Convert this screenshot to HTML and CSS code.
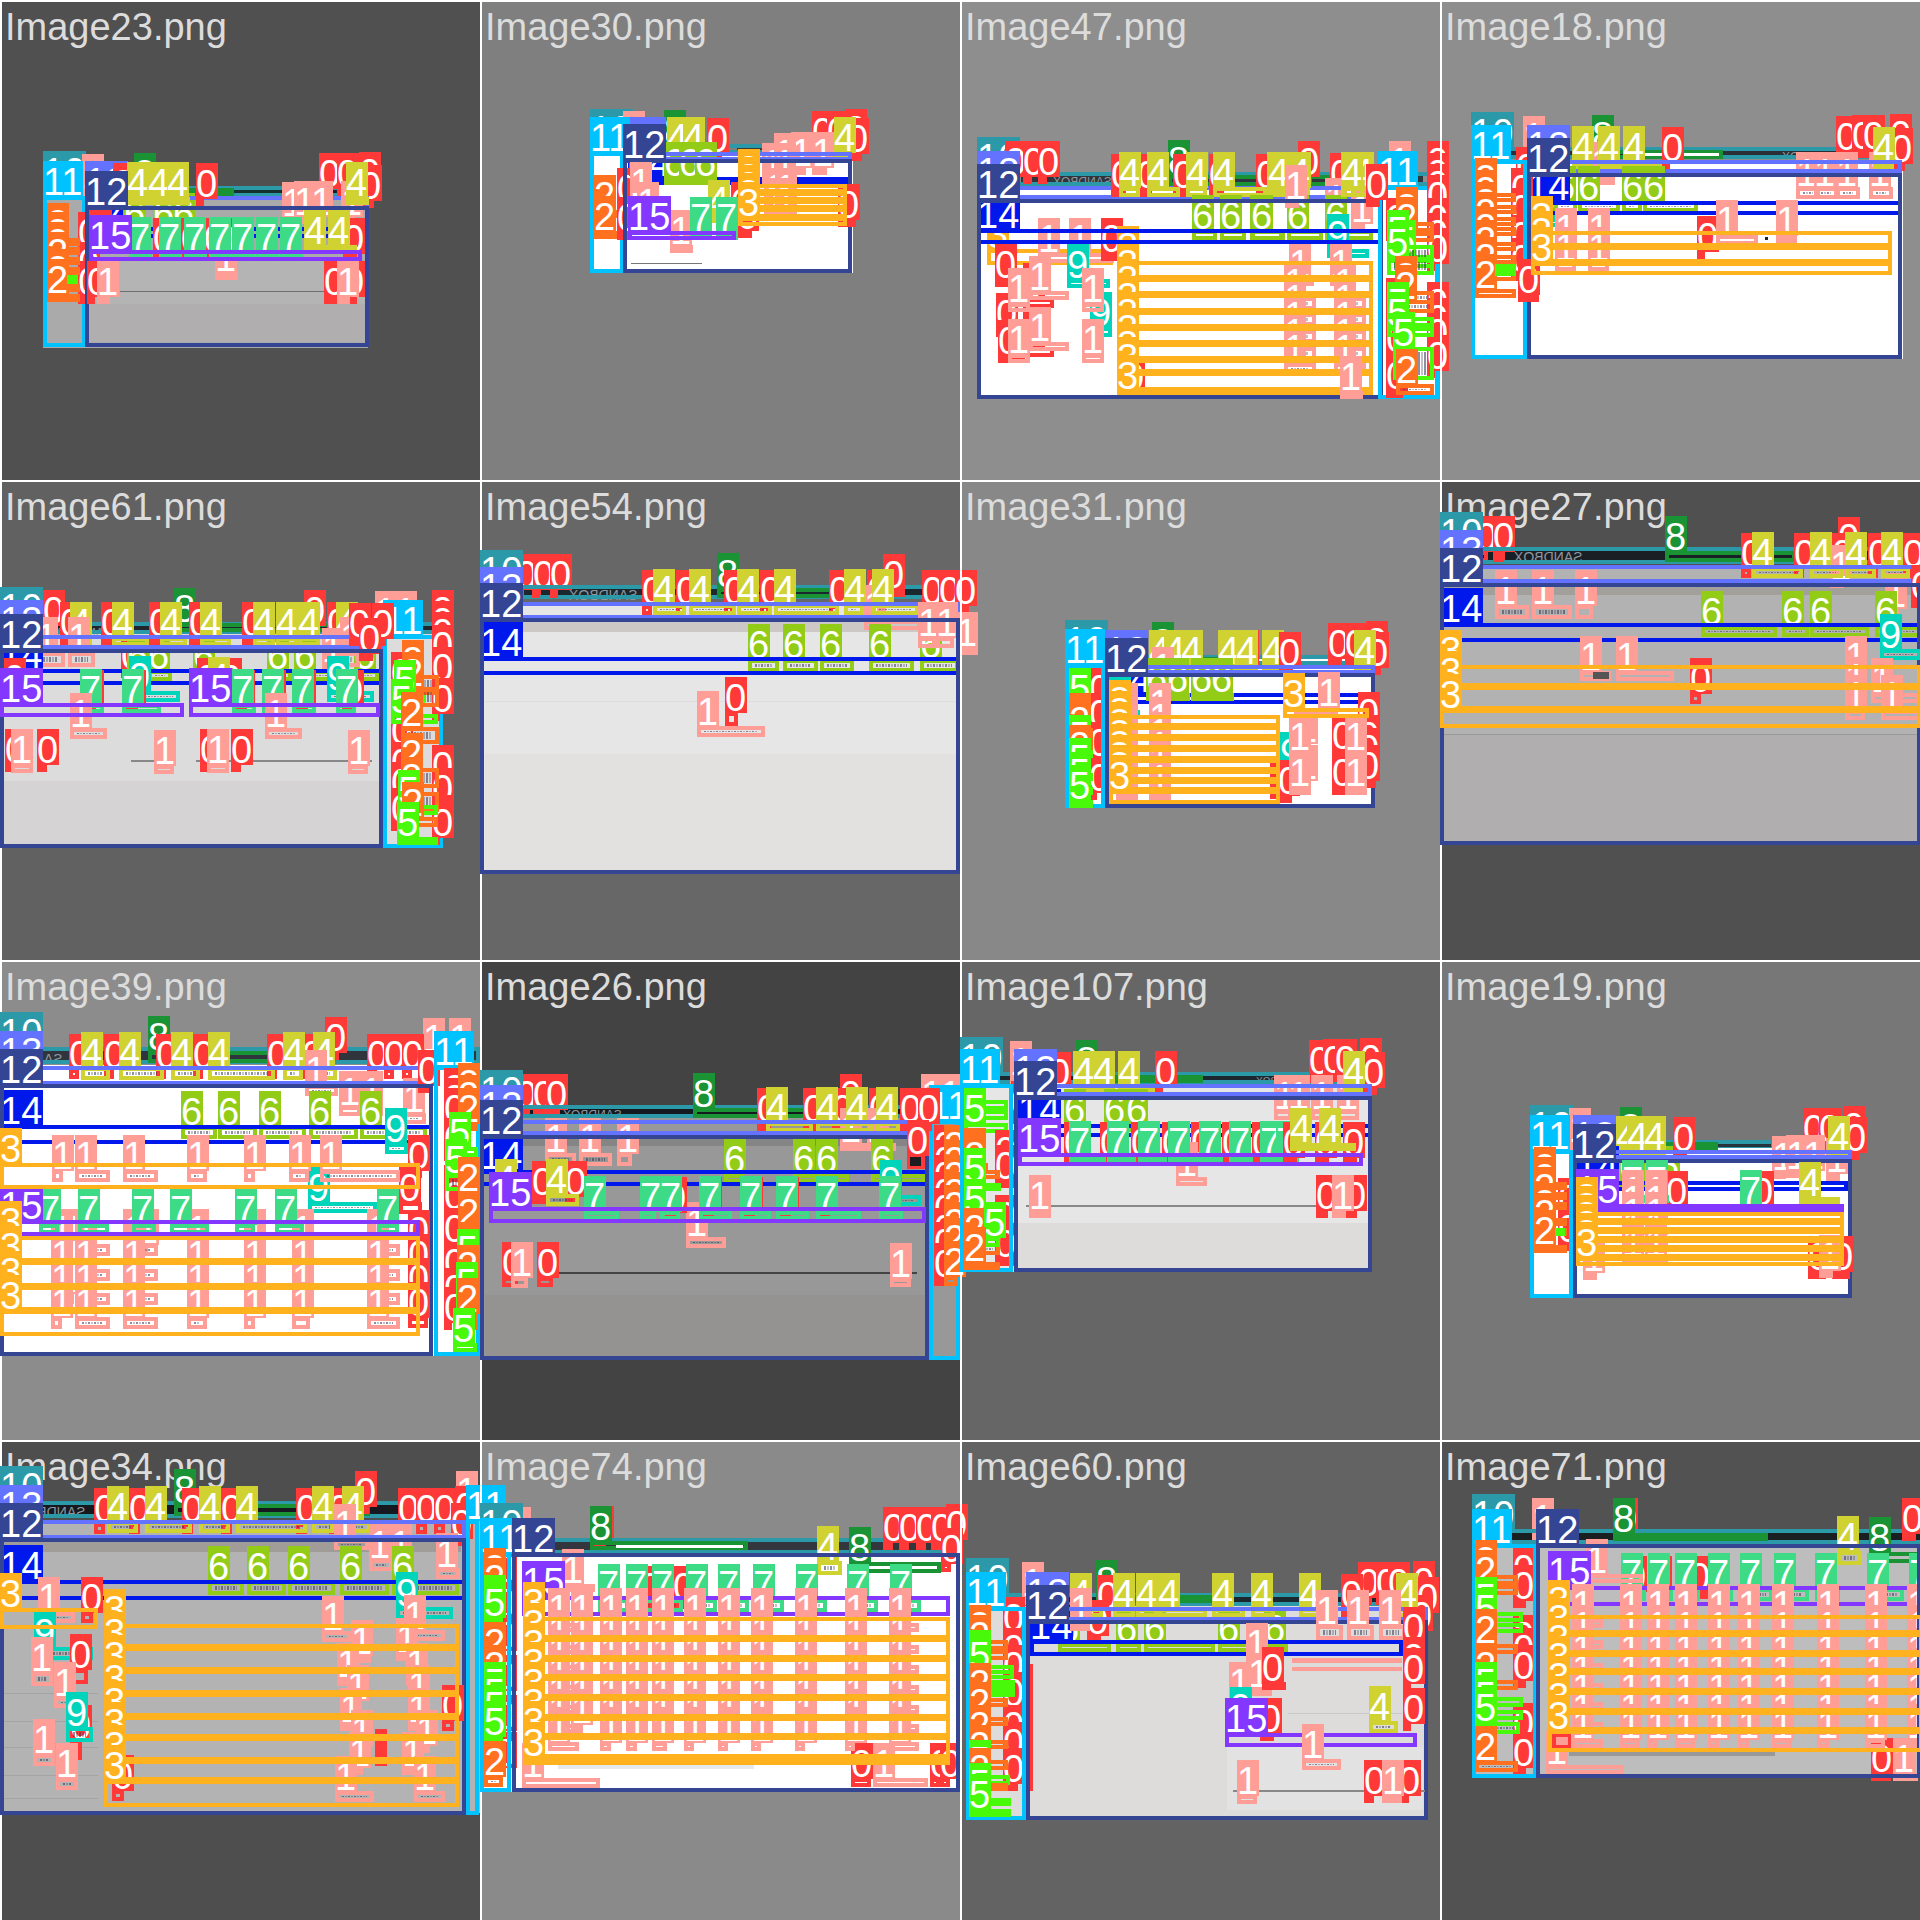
FILE: index.html
```html
<!DOCTYPE html>
<html lang="en">
<head>
<meta charset="utf-8">
<title>Training batch labels</title>
<link rel="stylesheet" href="styles.css">
</head>
<body>
<main class="sheet" id="sheet"></main>
<script src="batch.js"></script>
</body>
</html>
```
FILE: styles.css
```css
* { box-sizing: border-box; }

body {
  margin: 0;
  background: #fff;
  font-family: "Liberation Sans", Arial, sans-serif;
}

.sheet {
  display: grid;
  grid-template-columns: repeat(4, 1fr);
  overflow: hidden;
}

.tile {
  position: relative;
  display: grid;
  margin: 0;
  aspect-ratio: 1;
}

/* The outline and name are drawn over the labels of earlier tiles. */
.name {
  position: relative;
  padding: 3px;
  border-top: 2px solid #fff;
  border-left: 2px solid #fff;
  font-size: 38px;
  line-height: 44px;
  color: #dcdcdc;
}

.marks { position: absolute; left: 0; top: 0; }
.shot, .word, .box { position: absolute; }

.word {
  line-height: 16px;
  color: #8f979e;
  transform: scaleX(-1);
}

.box {
  border: 4px solid var(--c);
}

.ink {
  background-image: repeating-linear-gradient(90deg, rgba(50, 50, 80, .55) 0 2px, transparent 2px 3px, rgba(50, 50, 80, .3) 3px 5px, transparent 5px 6px);
  background-clip: content-box;
  background-origin: content-box;
  padding: 1px 3px;
}

.tag {
  position: absolute;
  left: -4px;
  top: -39px;
  height: 36px;
  padding-right: 1px;
  background: var(--c);
  color: #fff;
  font-size: 38px;
  line-height: 43px;
  white-space: nowrap;
}

.c0 { --c: #ff3838; }
.c1 { --c: #ff9d97; }
.c2 { --c: #ff701f; }
.c3 { --c: #ffb21d; }
.c4 { --c: #cfd231; }
.c5 { --c: #48f90a; }
.c6 { --c: #92cc17; }
.c7 { --c: #3ddb86; }
.c8 { --c: #1a9334; }
.c9 { --c: #00d4bb; }
.c10 { --c: #2c99a8; }
.c11 { --c: #00c2ff; }
.c12 { --c: #344593; }
.c13 { --c: #6473ff; }
.c14 { --c: #0018ec; }
.c15 { --c: #8438ff; }
```
FILE: batch.js
```js
// Annotation frames: origin on the sheet and units per pixel.
const frames = {
  A: [0, 100, 2.45], B: [590, 100, 2.24], C: [1260, 100, 2.373],
  D: [0, 510, 2.45], E: [640, 510, 2.45], F: [1280, 480, 2.447],
  G: [0, 1010, 2.45], H: [640, 1010, 2.45], I: [1280, 1010, 2.447],
  J: [0, 1450, 2.45], K: [640, 1450, 2.45], L: [1280, 1450, 2.447]
};

// One mark per entry: class x y width height. Comma lists repeat the mark.
// "#rrggbb" paints a plain area, "T" sets a word, "@" picks the frame.
const tiles = [
["Image23.png", "#505050", `@A;#aaaaaa 105 290 797 452;#b4b4b4 218 482 676 130;#b0aeae 218 613 676 113;#6e6e6e 293 573 500 4
#16202a 573 268 330 12;10 105 258 797 32;#16302e 573 270 115 8;1 200 267;8 328 264 245 18;0 782,825 265;0 880 261;0 882 300
14 218 381 676 32;6 303,375,423 384 57 14;13 208 288 696 42;0 276 295;0 480 293 15 16;4 312,362,410 291 57 18;1 691 352;1 720,763 348;1 835 348;4 848 291 56 16
11 105 288 106 452;0 190 440,530,587;2 115 415,442,470,502,552,582 80 24;#48f90a 163 525 26 27;12 208 318 696 422
#ff3838 218 331 57 20;1 526 515 57 13;0 375,443,500,555,840 459;7 315,390,450,511,568,626,685 457 57 18;4 745,803 435 70 14;0 212 587 20 6;1 238 587 33 14;0 795,840 587;1 826 587 33 14;15 218 450 669 33`],
["Image30.png", "#7f7f7f", `@B;#ffffff 0 165 589 354;10 0 132 500 30;#3a3a3a 330 144 82 6;1 75 138;8 166 135 100 14;0 498,530 138;0 571 133;0 575 160
0 261 159;4 172,208 156 50 12;1 412 204;1 450,497 202;4 547 156 40 12;14 85 231 495 24;6 165,200,236 231 50 10;1 385,412 235 50 20;13 75 156 514 26;11 0 156 77 363;0 60 310,395;2 10 330,392 52 16
0 87 205 40 18;12 75 177 514 342;1 90 290 50 20;1 105 350;0 315 350;0 330 390;4 265 345 50 10;0 556 357 40 8;1 390,415 310,340 45 16
1 180 436 51 17;7 224,282 395 50 10;3 332 253,275,300,325,352 245 28;15 85 393 242 27;#777777 92 488 160 3`],
["Image47.png", "#8e8e8e", `@B;#ffffff 866 260 1036 637;#30343c 966 225 900 30;T SANDBOX 1036 223 12;10 866 216 1036 42;0 930,970,1004 228 20 18;8 1295 225 480 33;@C;0 90 228;1 306 228;0 165 265;1 155 338 50 20;@B
13 866 258 909 39;0 1166,1225,1305,1387,1492 267;4 1185,1248,1335,1396,1516 261 48,75,46,120,90 30
3 890 447 282 48;1 1004,1072 459 100 30;6 1348,1412,1478 390 55,58,75 30;@C;6 -22,63,155 390 80,85,115 30;1 215 370;@B;0 1145 459 40 12;9 1068 537 97 27
0 907 537 45 25;0 910 685 45 28;0 914 765 60 24;0 970 595,740 70 30;9 1120 682 50 30;1 983 573,726 90 27;1 936 610,763 50 26;1 1102 610,763 50 26;0 1195 873 50 12;@C
4 18,68 262 50 24;1 60 300;4 218,192 262 55 30;9 160 447 100 27;1 70,165 535 60 24;1 58,175 590,640,690,740,790 75 40
@B;3 1180 483,534,582,633,681,729,777,816 574 57;3 1180 870 574 14;14 866 387 909 45;12 866 297 909 600;@C;1 190 873 55 12;11 280 258 145 639
0 397 228,265,298,330,400,445,490 18 14;0 397 650,700,740,810 18 14;0 252 297;0 300 400,640,760,870 40 20;2 323 365,395 90 30;5 318 465 95 40;5 302 435,470 112 55;2 320 573,600 93 40;5 302 650,680 112 30;5 316 742 97 100;2 323 852 90 33`],
["Image18.png", "#8e8e8e", `@C;#ffffff 501 180 1024 597;#2b3038 501 150 960 22;T SANDBOX 1238 148 12;10 501 141 1024 36;8 789 150 310 26;#ffffff 862 160 228 8;1 625 153;0 1368 153;0 1405,1430 150;0 1495 147;0 1498 190
0 608 247;1 785 230 58 12;4 740,801,862 183 50,60,100 25;0 953 186 20 20;1 1273,1315,1368,1445 261 58 35;4 1454 186 50 20;13 634 180 891 40;9 650 355 90 28;6 698,755,858,909 303 55,100,48,130 32;14 634 303 891 42
0 1038 453 18 24;1 1083 405 100 30;1 1224 405 50 20;#222222 1198 410 8 8;1 700,779 430,485 50 28;0 595 310,370,450,520 50 12;11 501 180 133 597;12 634 219 891 558;0 612 582 50 12;2 511 280,315,350,380,425,465,515,567 97 28;#48f90a 558 492 50 36;3 644 393,438 857 51;3 644 486 857 39`],
["Image61.png", "#616161", `@D;#dcdcdc 0 372 1082 640;#d5d3d3 10 812 920 190;#20262c 0 348 1080 18;T SANDBOX 130 345 12;10 0 336 1085 36;8 426 339 390 27;0 105 345;0 745 345;1 918,968 348
0 297 480;6 310,363,472,655,720,868 480 52,60,90,62,100,62 32;0 148,247,365,462,593,800 381;4 172,274,392,490,620,675,730,823 381 55,90,65,75,55,55,55,55 28;1 88,167 427 70,65 45;1 788 460;1 832 427 50 45
14 0 477 938 48;13 0 375 938 42;11 938 375 147 639;0 855,912 385;0 880 430;12 0 417 938 597;0 10 548;0 483,540 550;4 510 545 55 24;9 315,801 543 125,115 33
0 200,305,572,648,720,838 585;7 195,300,568,642,716,822 582 60,95,60,60,60,50 28;1 171,650 655 90 32;15 0 579 452 42;15 462 579 468 42;#888888 322 750 110 5;#888888 480 750 430 5
0 13,90,490,567 763 25 24;1 27,507 763 55 26;1 377,853 765 50 26;0 1058 345,378,410,450,515,610 18 10;0 1058 810,880,960,980 18 10;0 958 530,705,800,860,940 20 10
2 984 495,530 90 60;5 965 555 75 20;5 958 613 116 30;2 982 652 92 50;2 982 775,845 92 60;5 975 885 99 30;2 985 920 89 30;5 973 982 101 18`],
["Image54.png", "#676767", `@E;#e6e6e6 -392 285 1176 795;#cbc8c6 -380 336 1160 30;#e2e1e0 -380 733 1158 347;#dddddd -380 572 1160 3;#1c2830 -392 237 1176 30;T SANDBOX -173 232 14
0 -304,-262,-221 237 20 26;10 -393 225 1177 42;#ff3838 -265 240 20 24;#ff3838 -221 240 20 24;8 189 234 390 30;0 596 237 55 8;0 5,88,205,295,463,555 285 25 30;1 550 330 140 30;4 32,120,238,328,500,568 282 82,115,85,160,50,115 33
0 691,733,772 285;13 -393 276 1177 50;6 265,350,441,561,685 447 75,85,83,110,95 39;14 -393 441 1177 54;1 775 411 55 6;1 681,725 381 45 34;12 -393 324 1177 768;1 140 648 166 33;0 208 606 32 42`],
["Image31.png", "#888888", `@E;#ffffff 1042 440 759 453;10 1042 435 759 30;8 1254 441 200 18;0 1262 470;4 1248,1285,1325 465 55 18;0 1463 466;4 1415,1460,1524 465 55 18;1 1254 515;@F;0 -3 560;0 118,160 535;0 210 528;0 212 562;4 181 555 50 18
@E;14 1150 549 650 33;6 1240,1290,1350,1400 549 57 22;13 1140 465 661 26;0 1100 580,655,740,845 20 12;11 1042 462 98 431;5 1052 580 50 40;2 1052 655,675 60 50;5 1052 720 60 24;2 1052 750;5 1052 790,830,870 60 12
9 1150 600 75 20;12 1140 489 661 404;1 1165,1247 625,665,710,750,790,850 55 20;#ff3838 1543 757 18 112;@F;9 0 860 20 20;0 190 740,810,850,900 45 24;1 35,40 790,900;0 -5 945;0 128 810,922 40 24;1 22,160 812,922 55 24;1 93 680 50 24
@E;3 1150 615,648,681,714,747,780,810,840 418 42;@F;3 7 683 210 30`],
["Image27.png", "#505050", `@F;#b2b2b2 392 255 1176 830;#a39f9a 400 315 1168 30;#b0aeae 400 766 1160 320;#999999 400 763 1168 4;#1a1f26 392 210 1176 40;T SANDBOX 573 207 14
0 480,522 213 30 33;0 1365 215;10 392 201 1176 50;#ff3838 522 216 28 30;8 943 213 320 33;0 1127,1257,1350,1440,1525 264 25 30;1 526,617,723 375 82,97,45 42;1 1345 300;1 1480 385;4 1154,1296,1382,1470 261 125,80,75,70 33
13 392 255 1176 55;6 1031,1228,1298,1455 438 187,67,145,113 33;14 392 429 1176 57;0 1545 360;12 392 309 1176 786;9 1468 507 100 33;1 733,823 573 75,143 31;#555555 765 576 38 22;1 1382 573,635,690 50 30;1 1447 640 120 30;1 1470 690 98 30;0 1004 639 28 33
3 392 555 1176 66;3 392 618 1176 72;3 392 687 1176 57`],
["Image39.png", "#8c8c8c", `@G;#ffffff 0 165 1175 873;#30343c 0 123 1170 36;T SANDBOX -14 122 14;10 0 111 1175 50;8 363 123 335 35;0 797 126;1 1036,1100 129
0 170,255,382,472,653,740,900,942,985 177 25 30;4 198,292,419,510,694,768 171 72,110,70,165,50,60 39;1 748 225 80 33;1 830,885 288 55 30;6 443,533,635,757,883 348 87,95,115,120,165 40;1 988 310 57 33
13 0 168 1062 57;0 1025 225;11 1064 168 112 870;14 0 345 1062 57;12 0 222 1062 816;0 1000 480;0 978 575 57 35;9 943 399 57 33;9 755 577 170 33
1 127,184,302,457,599,709,785 480 28,85,85,50,28,50,195 37;1 155,335 702 28 32;0 1000 705,777,850,922 48 34;1 155,597 702,777,850 28 32;1 125,184,302,457,599,715,898 702,777,850,922 28,85,85,50,28,45,80 37
7 96,190,323,416,576,674,924 642 50,75,60,95,50,72,55 30;15 0 630 1030 48;3 0 459 1028 78;3 0 678,753,828,900 1028 78;0 1088 280,310,340,430,570,600,700,800,880,935 20 12;2 1122 265,300,340 50 24;5 1100 410 70 30;5 1090 492 80 50;2 1122 547 48 50;2 1122 650,740 48 30;5 1120 762 48 24;2 1120 810 48 24;5 1118 862 48 40;2 1120 910 48 50;5 1110 998 60 27`],
["Image26.png", "#434343", `@H;#989898 -392 320 1176 730;#858585 -380 387 1080 20;#959391 -380 855 1080 183;#151a20 -392 295 1176 30;T SANDBOX -188 292 12
0 -304,-262,-231 297;10 -392 285 1176 40;8 130 294 280 30;0 490 297;1 688,735 297;0 287,399,470,560 339;1 -233,-149,-56 429 75,82,37 40;1 490,555 400 70 20;4 309,431,505,578 336 115,80,65,58 30;11 709 330 75 720
0 636,680 340;13 -392 330 1101 45;6 206,376,432,565 492 50,60,80,135 26;14 -392 480 1101 48;12 -392 375 1101 675;0 655 435 45 42;#1c1c22 662 442 28 26;9 588 555 100 33;4 -355 552;0 -265,-183 558;4 -230 552 80 36
1 113 681 98 33;0 62,147,247,335,432 605;7 -138,0,50,144,245,333,430,585 603 85,40,50,80,75,80,110,60 27;15 -371 591 1070 48;#444444 -200 787 880 5;0 -338,-253 801 40 30;1 -316 801 42 32;1 612 804 52 27
0 720 450,495,540,590,640,700,740,805 24 24;2 745 450,495,540,590,630,680,730,797 35 30`],
["Image107.png", "#666666", `@H;#e6e6e6 784 222 1009 564;#dedcdb 925 640 868 134;#1c2830 784 198 1009 16;T SANDBOX 1508 193 10;10 784 186 1009 36;1 906 198;8 1069 195 310 24
@I;0 72 195;0 105,135 192;0 195 190;0 202 232;1 -15,20,75,140 300 55 30;@H;0 1262 228 20 18;4 1060,1110,1170 228 50,55,90 22;0 1003 231 20 18;0 910 318 30 24;6 1038,1138,1190 342 50 14;14 925 342 868 39;@I;4 154 228 50 20
@H;13 916 222 877 36;5 793 270,300,340 108 30;0 870 465,510,660,745 50 12;11 784 222 131 564;12 916 258 877 528;0 1040,1128,1203,1278,1350,1425,1500 442;1 1312 500 77 27;7 1050,1145,1220,1293,1370,1443,1518 438 90,70,70,80,60,60,80 22
@I;7 -10 438 57 22;0 8,85,155 440;4 25,96 400 70,90 24;@H;15 927 429 846 39;#888888 945 585 770 5;1 953 600 55 20;@I;0 88,160 600 30 20;1 128 600 35 20
@H;2 793 460 60 20;2 793 480 87 28;5 793 520 90 24;5 793 613 95 24;2 793 700 87 35;5 843 680 38 30;2 793 757 87 15`],
["Image19.png", "#777777", `@I;#ffffff 612 414 787 449;#28343c 1000 400 290 12;10 612 390 787 24;#28343c 1072 402 130 10;1 707 400;8 833 396 240 18;0 1280,1320 398;0 1378 393;0 1382 425
6 830,890,925 513 57 12;4 823,850,890 423 55 20;0 961 425;1 1205 483;1 1237,1279 480;1 1337 490;4 1342 423 55 20;14 725 513 665 30;13 716 420 683 28;0 680 610,700;11 612 420 105 443;2 622 515,545,575,625,655,705 80 24;#48f90a 672 654 25 24;12 716 447 683 416
0 945,1155 587 55 6;7 838,895 555 57 12;7 1125 585 55 12;4 1269 560 100 18;0 1291,1350 782 45 18;1 742 785 35 14;1 838,893 585,612,650,690,740 57 16;1 1320 780;15 725 582 657 24;3 725 606,632,659,686,713,740 657 28`],
["Image34.png", "#4e4e4e", `@J;#b3b3b3 0 210 1175 880;#a09c98 10 276 1120 30;#a4a4a4 10 730 230 4;#a4a4a4 10 812 230 4;#a4a4a4 10 890 230 4;#a4a4a4 10 975 230 4;#a4a4a4 10 1045 230 4;#161a20 0 165 1175 38;T SANDBOX 42 161 14
10 0 153 1175 50;8 426 162 480 36;0 870 168;1 1116 168;0 230,315,445,542,725,805,975,1020,1063 219 27 32;0 1115 213;0 1105 265;4 262,355,488,578,764,838 213 75,115,75,175,55,70 36;1 818 267 85 33;1 903,955 328 60 35;6 509,604,706,832,960 393 87,95,115,120,165 42;1 1067 354 58 33
11 1142 210 33 885;13 0 210 1142 57;14 0 390 1142 60;12 0 264 1142 831;9 970 470 140 35;0 199 486 30 33;1 93 485 90 33;9 83 590 145 40;0 172 657 45 45;1 75 665 55 42;1 133 740 70 34;0 172 870 30 60;9 162 830 65 45;1 82 912 55 36;1 138 985 55 35
0 1083 810 30 33;#ff3838 918 837 30 110;1 790 543 70 33;1 860 615 50 12;1 825 685;1 850 750;1 832 820;1 860 885;1 855 950;1 820 1022 95 34;1 990 540 100 34;1 970 610 70 20;1 995 685;1 1000 750;1 1000 820;1 1020 885;1 985 950;1 1015 1022 75 34
3 0 474 240 63;0 274 1020 30 33;3 256 522,591,660,729,798,861,930 870 63;3 256 990 870 82`],
["Image74.png", "#8a8a8a", `@K;#ffffff -392 309 1176 716;#33363c -392 276 1176 30;0 -117 274;1 -320 276;10 -393 264 1177 48;8 -123 273 388 27;#ffffff -60 285 310 9;0 595,635,675,712 276 25 24;0 750 267;0 737 340 25 26;4 434 333 62 42;8 512 336 225 33
1 -191 402 80 24;0 0,80 453;7 -103,-35,29,113,191,277,382,507,612 447 75 38;15 -290 438 1049 60;#e5e9ec -200 945 480 12;0 517 985 50 27;0 710,735 985 24 27;1 -290 983 190 30;1 571 985 135 27
0 -355 400,500,600,720,840,950 18 20;11 -392 309 75 717;2 -381 400,430 46 20;5 -381 480,500 46 20;2 -381 622 46 20;2 -381 690;5 -381 740,770,810,857 46 20;2 -381 978 46 33
1 -170 520,585,645,705,765,822 30 28;1 -225,-98,-35,29,108,191,272,380,502,610 520,585,645,705,765,822,877 75,28,28,36,24,24,24,24,24,74 28;12 -313 309 1097 717;3 -286 501,564,624,681,741,801,858 1045 66;3 -286 921 1045 24`],
["Image60.png", "#636363", `@K;#dddcdb 799 465 1131 645;#1c2830 799 441 1131 20;10 799 429 1131 40;1 936 441;8 1118 435 330 24;@L;0 190,235,265 440;0 325 438;0 150 478;0 335 485;0 320 540;@K
0 1120 480;0 1095 555;6 1025,1165,1236,1416,1530 579 130,62,175,80,60 28;4 1053 474 80 26;4 1159,1215,1270,1401,1497 474 55,55,120,80,60 26;@L;4 47,284 474 80,50 26;@K;14 955 570 913 48;1 1053 520 50 20;13 946 471 984 42;0 890 545,640,690,770,870,920,1000 36 20;11 799 471 147 639
12 946 510 984 600;#ff3838 955 643 8 380;@L;1 87,165,243 525 65 44;0 300 575;0 300 665,700,820 20 20;#ff9d97 30 625 270 38;#dddcdb 30 640 270 12;#c8c8c8 20 790 280 3;#e2e2e2 -130 890 480 190;@K
1 1485 625;1 1490 715 60 10;1 1443 740;0 1525 695 60 20;9 1446 815;0 1520 850;@L;4 218 813 70 36;@K;15 1433 849 471 42;#888888 1453 1020 470 5;1 1463 1035 50 27;@L;1 54 927 95 33;0 206,290 1035 24 24;1 250 1035 50 24
@K;2 807 570,600 95 30;5 807 645,660 110 26;#48f90a 860 690 60 50;2 807 745 95 26;2 807 800,870 95 26;2 807 930 95 30;5 807 975 100 30;2 807 1000 95 24;5 807 1045,1077 103 20`],
["Image71.png", "#525252", `@L;#bdbdbd 469 285 1105 699;#1a1f22 469 248 1105 26;1 617 249 60 18;0 822 249;10 469 237 1105 45;8 816 249 380 24;0 1521 249;4 1362 303 62 42;8 1441 306 130 33;#999999 706 907 504 12
0 845,905,1000 423 50 20;7 835,901,966,1047,1125,1208,1310,1437,1540 414 60,60,60,60,80,85,60,90,60 40;1 750 372 140 27;15 655 408 915 60;0 1445 970 50 8;1 1500 970 60 8
1 715,833,899,966,1047,1120,1203,1313,1431,1535 508,570,640,700,755,815,867 75,50,26,50,26,30,50,30,50,30 28;0 570 400,450,600,640,690,865,950 33 20;11 469 282 160 702
2 478 375,405 104 30;5 478 485,520 118 30;2 478 583 104 30;2 478 690 104 30;5 478 740,780 118 30;5 478 815 110 36;2 478 932 104 33;12 627 282 941 702;1 650 945 190 27;3 657 495,549,609,663,723,783,840 917 66;#ff3838 666 852 47 41;#ff9d97 676 860 30 24`]
];

const inked = ["1", "2", "4", "5", "6", "7", "9"];
const sheet = document.getElementById("sheet");

function place(node, x, y, w, h) {
  node.style.left = x + "px";
  node.style.top = y + "px";
  if (w) node.style.width = w + "px";
  if (h) node.style.height = h + "px";
}

tiles.forEach(([name, shade, marks], i) => {
  const column = i % 4, row = Math.floor(i / 4);
  const tile = document.createElement("figure");
  tile.className = "tile";
  tile.style.background = shade;
  const caption = document.createElement("figcaption");
  caption.className = "name";
  caption.textContent = name;
  const layer = document.createElement("div");
  layer.className = "marks";
  caption.style.zIndex = layer.style.zIndex = column * 4 + row + 1;
  tile.append(caption, layer);
  sheet.append(tile);

  let frame = frames.A;
  marks.split(/[;\n]+/).forEach(entry => {
    if (entry[0] === "@") { frame = frames[entry[1]]; return; }
    const part = entry.trim().split(/\s+/);
    const px = v => Math.round(frame[0] + v / frame[2]) - column * 480;
    const py = v => Math.round(frame[1] + v / 3) - row * 480;
    if (part[0] === "T") {
      const word = document.createElement("span");
      word.className = "word";
      word.textContent = part[1];
      word.style.fontSize = part[4] + "px";
      place(word, px(+part[2]), py(+part[3]));
      layer.append(word);
      return;
    }
    const [kind, xs, ys, ws = "34", h = "24"] = part;
    const widths = ws.split(",");
    const tops = ys.split(",");
    tops.forEach((y, k) => xs.split(",").forEach((x, n) => {
      const w = Math.round((widths[n] || widths[0]) / frame[2]);
      let tall = Math.round(h / 3);
      // Table rows run down to the top line of the next row.
      if (kind === "3" && k < tops.length - 1) tall = py(+tops[k + 1]) - py(+y) + 1;
      const node = document.createElement("div");
      if (kind[0] === "#") {
        node.className = "shot";
        node.style.background = kind;
      } else {
        node.className = "box c" + kind;
        if (inked.includes(kind) && w > 18 && tall > 9) node.classList.add("ink");
        const tag = document.createElement("span");
        tag.className = "tag";
        tag.textContent = kind;
        node.append(tag);
      }
      place(node, px(+x), py(+y), w, tall);
      layer.append(node);
    }));
  });
});
```
